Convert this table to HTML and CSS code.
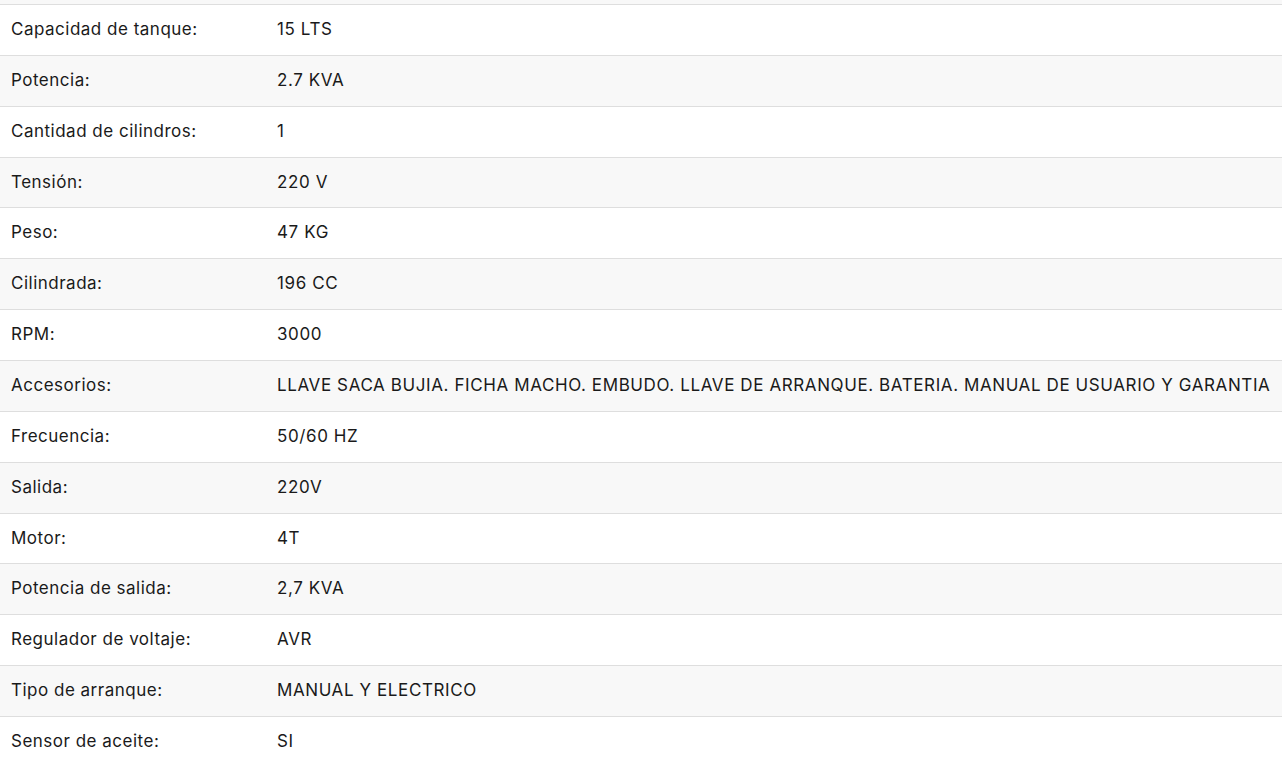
FILE: index.html
```html
<!DOCTYPE html>
<html lang="es">
<head>
<meta charset="utf-8">
<link rel="stylesheet" href="styles.css">
</head>
<body>
<div class="prev-row"></div>
<table class="specs">
<tbody>
<tr><td class="label">Capacidad de tanque:</td><td class="value">15 LTS</td></tr>
<tr><td class="label">Potencia:</td><td class="value">2.7 KVA</td></tr>
<tr><td class="label">Cantidad de cilindros:</td><td class="value">1</td></tr>
<tr><td class="label">Tensión:</td><td class="value">220 V</td></tr>
<tr><td class="label">Peso:</td><td class="value">47 KG</td></tr>
<tr><td class="label">Cilindrada:</td><td class="value">196 CC</td></tr>
<tr><td class="label">RPM:</td><td class="value">3000</td></tr>
<tr><td class="label">Accesorios:</td><td class="value">LLAVE SACA BUJIA. FICHA MACHO. EMBUDO. LLAVE DE ARRANQUE. BATERIA. MANUAL DE USUARIO Y GARANTIA</td></tr>
<tr><td class="label">Frecuencia:</td><td class="value">50/60 HZ</td></tr>
<tr><td class="label">Salida:</td><td class="value">220V</td></tr>
<tr><td class="label">Motor:</td><td class="value">4T</td></tr>
<tr><td class="label">Potencia de salida:</td><td class="value">2,7 KVA</td></tr>
<tr><td class="label">Regulador de voltaje:</td><td class="value">AVR</td></tr>
<tr><td class="label">Tipo de arranque:</td><td class="value">MANUAL Y ELECTRICO</td></tr>
<tr><td class="label">Sensor de aceite:</td><td class="value">SI</td></tr>
</tbody>
</table>
</body>
</html>
```
FILE: styles.css
```css
html, body {
  margin: 0;
  padding: 0;
  background: #fff;
}
body {
  font-family: Inter, "Liberation Sans", sans-serif;
  font-size: 17px;
  letter-spacing: 0.5px;
  color: #1a1a1a;
}
.prev-row {
  height: 4px;
  background: #f8f8f8;
}
.specs {
  width: 100%;
  border-collapse: collapse;
}
.specs td {
  border-top: 1px solid #dedede;
  padding: 13px 0 14px 11px;
  line-height: 22.857px;
  vertical-align: middle;
  text-align: left;
  white-space: nowrap;
}
.specs td.label {
  width: 266px;
  box-sizing: border-box;
}
.specs td.value {
  letter-spacing: 0.6px;
}
.specs tr:nth-child(even) td {
  background: #f8f8f8;
}
```
